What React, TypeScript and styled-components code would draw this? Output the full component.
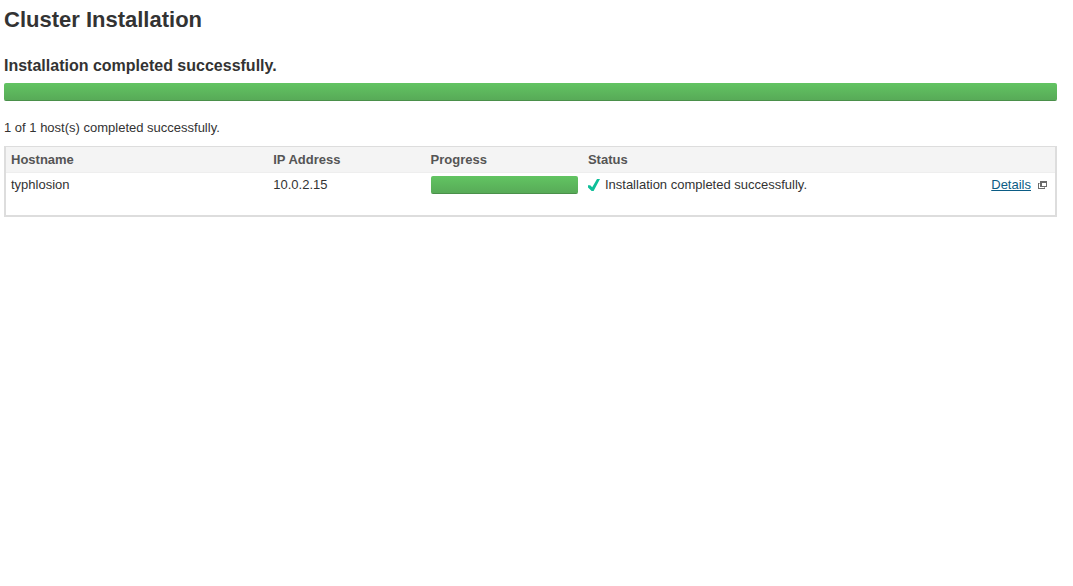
import React from "react";
import styled, { createGlobalStyle } from "styled-components";

const GlobalStyle = createGlobalStyle`
  body {
    margin: 0;
    background: #fff;
    color: #333;
    font: 13px/18px "Liberation Sans", Arial, sans-serif;
  }
`;

const Page = styled.main`
  padding: 0 16px 0 4px;
`;

const Title = styled.h1`
  margin: 0 0 16px;
  font-size: 22px;
  line-height: 40px;
`;

const Subtitle = styled.h2`
  margin: 0 0 7px;
  font-size: 16px;
  line-height: 20px;
`;

const Track = styled.div`
  height: 18px;
  border-radius: 2px;
  background: #f5f5f5;
  overflow: hidden;
`;

const Fill = styled.div`
  box-sizing: border-box;
  height: 100%;
  background: linear-gradient(#62c462, #57a957);
  box-shadow: inset 0 -1px 0 rgba(0, 0, 0, 0.15);
`;

const Summary = styled.p`
  margin: 18px 0 9px;
`;

const TableFrame = styled.div`
  border: solid #ddd;
  border-width: 1px 2px 2px;
  padding-bottom: 17px;
`;

const HostTable = styled.table`
  width: 100%;
  table-layout: fixed;
  border-collapse: collapse;
`;

const HeaderCell = styled.th<{ $width: string }>`
  box-sizing: border-box;
  width: ${(p) => p.$width};
  padding: 4px 5px 3px;
  background: #f4f4f4;
  border-bottom: 1px solid #eee;
  color: #555;
  text-align: left;
`;

const Cell = styled.td<{ $align?: "right" }>`
  padding: 3px 5px 4px;
  vertical-align: top;
  text-align: ${(p) => p.$align ?? "left"};
`;

const Status = styled.div`
  display: flex;
  align-items: center;
  gap: 5px;
`;

const Actions = styled.div`
  display: flex;
  align-items: center;
  justify-content: flex-end;
  gap: 7px;
  padding-right: 3px;
`;

const DetailsLink = styled.a`
  color: #0b5c85;
  text-decoration: underline;
`;

const CheckIcon = () => (
  <svg width="12" height="14" viewBox="0 0 12 14" aria-hidden="true">
    <path d="M9 1H12L5.6 13H3.6L0 9.6V7.3h2.2l2 1.9z" fill="#0fbf99" />
  </svg>
);

const PopupIcon = () => (
  <svg width="9" height="8" viewBox="0 0 9 8" shapeRendering="crispEdges" aria-hidden="true">
    <path d="M2 0h7v6H2zM4 2v3h4V2z" fill="#6b6b6b" fillRule="evenodd" />
    <path d="M0 2h1v6H0zM1 7h6v1H1z" fill="#6b6b6b" />
    <path d="M1 2h1v1H1zM6 6h1v1H6z" fill="#aaa" />
  </svg>
);

const ProgressBar = ({ value, label }: { value: number; label: string }) => (
  <Track
    role="progressbar"
    aria-label={label}
    aria-valuemin={0}
    aria-valuemax={100}
    aria-valuenow={value}
  >
    <Fill style={{ width: `${value}%` }} />
  </Track>
);

const hosts = [
  {
    name: "typhlosion",
    ip: "10.0.2.15",
    progress: 100,
    status: "Installation completed successfully.",
  },
];

export default function App() {
  return (
    <>
      <GlobalStyle />
      <Page>
        <Title>Cluster Installation</Title>
        <Subtitle>Installation completed successfully.</Subtitle>
        <ProgressBar value={100} label="Overall progress" />
        <Summary>1 of 1 host(s) completed successfully.</Summary>
        <TableFrame>
          <HostTable>
            <thead>
              <tr>
                <HeaderCell $width="25%">Hostname</HeaderCell>
                <HeaderCell $width="15%">IP Address</HeaderCell>
                <HeaderCell $width="15%">Progress</HeaderCell>
                <HeaderCell $width="30%">Status</HeaderCell>
                <HeaderCell $width="15%" aria-label="Actions" />
              </tr>
            </thead>
            <tbody>
              {hosts.map((host) => (
                <tr key={host.name}>
                  <Cell>{host.name}</Cell>
                  <Cell>{host.ip}</Cell>
                  <Cell>
                    <ProgressBar value={host.progress} label={`Progress of ${host.name}`} />
                  </Cell>
                  <Cell>
                    <Status>
                      <CheckIcon />
                      {host.status}
                    </Status>
                  </Cell>
                  <Cell $align="right">
                    <Actions>
                      <DetailsLink href="#details">Details</DetailsLink>
                      <PopupIcon />
                    </Actions>
                  </Cell>
                </tr>
              ))}
            </tbody>
          </HostTable>
        </TableFrame>
      </Page>
    </>
  );
}
